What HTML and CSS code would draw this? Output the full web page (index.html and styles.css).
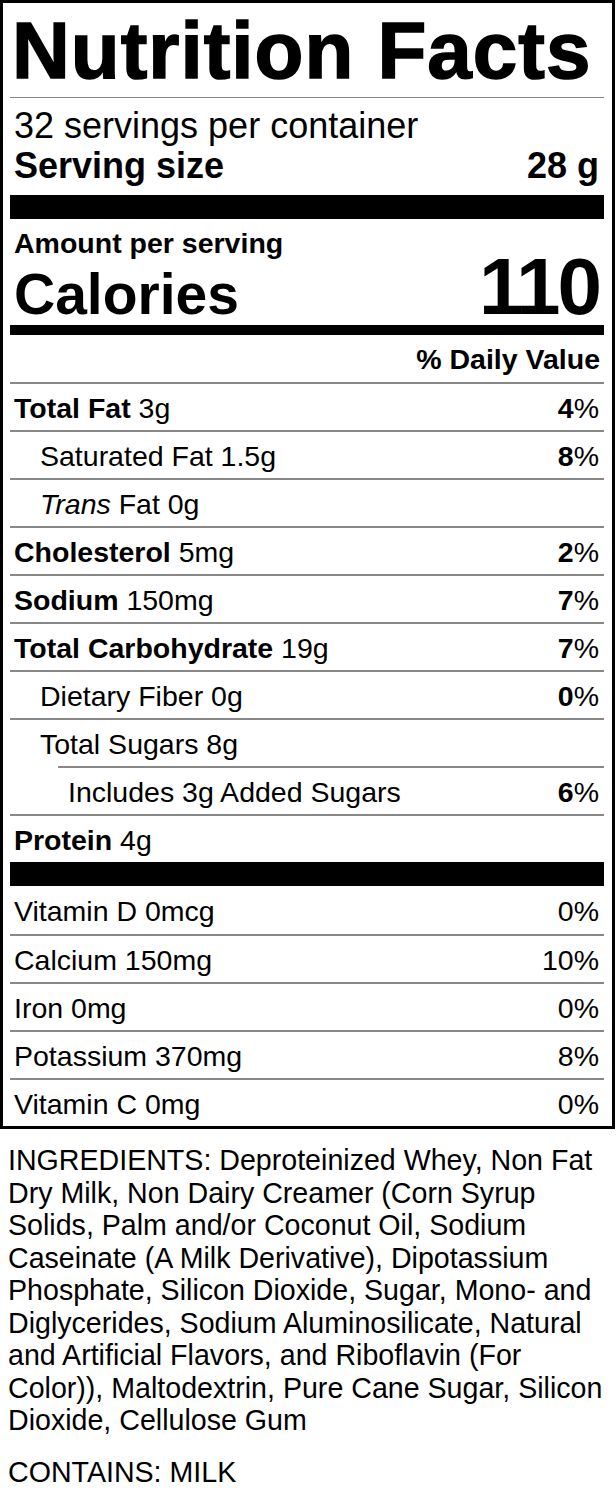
FILE: index.html
```html
<!DOCTYPE html>
<html lang="en">
<head>
<meta charset="utf-8">
<title>Nutrition Facts</title>
<link rel="stylesheet" href="styles.css">
</head>
<body>
<div class="label">
  <h1 class="title">Nutrition Facts</h1>
  <div class="servings">
    <div class="servings-count">32 servings per container</div>
    <div class="serving-size"><span>Serving size</span><span>28 g</span></div>
  </div>
  <div class="bar bar-thick"></div>
  <div class="amount">
    <div class="amount-head">Amount per serving</div>
    <div class="calories"><span class="cal-label">Calories</span><span class="cal-value">110</span></div>
  </div>
  <div class="bar bar-medium"></div>
  <div class="dv-head">% Daily Value</div>
  <div class="row"><span><b>Total Fat</b> 3g</span><span><b>4</b>%</span></div>
  <div class="row indent1"><span>Saturated Fat 1.5g</span><span><b>8</b>%</span></div>
  <div class="row indent1"><span><i>Trans</i> Fat 0g</span><span></span></div>
  <div class="row"><span><b>Cholesterol</b> 5mg</span><span><b>2</b>%</span></div>
  <div class="row"><span><b>Sodium</b> 150mg</span><span><b>7</b>%</span></div>
  <div class="row"><span><b>Total Carbohydrate</b> 19g</span><span><b>7</b>%</span></div>
  <div class="row indent1"><span>Dietary Fiber 0g</span><span><b>0</b>%</span></div>
  <div class="row indent1"><span>Total Sugars 8g</span><span></span></div>
  <div class="row indent2"><span>Includes 3g Added Sugars</span><span><b>6</b>%</span></div>
  <div class="row"><span><b>Protein</b> 4g</span><span></span></div>
  <div class="bar bar-thick"></div>
  <div class="row first"><span>Vitamin D 0mcg</span><span>0%</span></div>
  <div class="row"><span>Calcium 150mg</span><span>10%</span></div>
  <div class="row"><span>Iron 0mg</span><span>0%</span></div>
  <div class="row"><span>Potassium 370mg</span><span>8%</span></div>
  <div class="row"><span>Vitamin C 0mg</span><span>0%</span></div>
</div>
<div class="ingredients">
  <p>INGREDIENTS: Deproteinized Whey, Non Fat<br>Dry Milk, Non Dairy Creamer (Corn Syrup<br>Solids, Palm and/or Coconut Oil, Sodium<br>Caseinate (A Milk Derivative), Dipotassium<br>Phosphate, Silicon Dioxide, Sugar, Mono- and<br>Diglycerides, Sodium Aluminosilicate, Natural<br>and Artificial Flavors, and Riboflavin (For<br>Color)), Maltodextrin, Pure Cane Sugar, Silicon<br>Dioxide, Cellulose Gum</p>
  <p>CONTAINS: MILK</p>
</div>
</body>
</html>
```
FILE: styles.css
```css
* { box-sizing: border-box; }
body {
  margin: 0;
  background: #fff;
  color: #000;
  font-family: "Liberation Sans", Arial, Helvetica, sans-serif;
}
.label {
  width: 615px;
  border: 3px solid #000;
  padding: 0 8px 0 7px;
  display: flex;
  flex-direction: column;
}
.title {
  margin: 0;
  height: 95px;
  padding: 2px 0 2px 2px;
  font-size: 80px;
  line-height: 91px;
  font-weight: bold;
  letter-spacing: 1px;
  -webkit-text-stroke: 1.5px #000;
  white-space: nowrap;
  border-bottom: 1px solid #888;
}
.servings {
  height: 97px;
  padding: 8px 5px 0 4px;
  font-size: 36px;
  line-height: 40px;
}
.serving-size {
  display: flex;
  justify-content: space-between;
  font-weight: bold;
}
.bar { background: #000; }
.bar-thick { height: 24px; }
.bar-medium { height: 10px; }
.amount {
  height: 106px;
  padding: 9px 5px 0 4px;
}
.amount-head {
  font-size: 28.5px;
  line-height: 30px;
  font-weight: bold;
}
.calories {
  display: flex;
  justify-content: space-between;
  align-items: baseline;
  line-height: 58px;
  font-weight: bold;
}
.cal-label { font-size: 57px; }
.cal-value { font-size: 80px; letter-spacing: -3px; }
.dv-head {
  height: 47px;
  display: flex;
  align-items: center;
  justify-content: flex-end;
  padding: 2px 4px 0;
  font-size: 28.5px;
  font-weight: bold;
}
.row {
  height: 48px;
  display: flex;
  align-items: center;
  justify-content: space-between;
  border-top: 2px solid #888;
  padding: 2px 5px 0 4px;
  font-size: 28.5px;
  white-space: nowrap;
}
.row.first { border-top: 0; }
.row.indent1 { padding-left: 30px; }
.row.indent2 { margin-left: 48px; padding-left: 10px; }
.ingredients {
  padding: 15px 8px 0 8px;
  font-size: 28.6px;
  line-height: 32.5px;
}
.ingredients p { margin: 0 0 19px 0; white-space: nowrap; }
```
